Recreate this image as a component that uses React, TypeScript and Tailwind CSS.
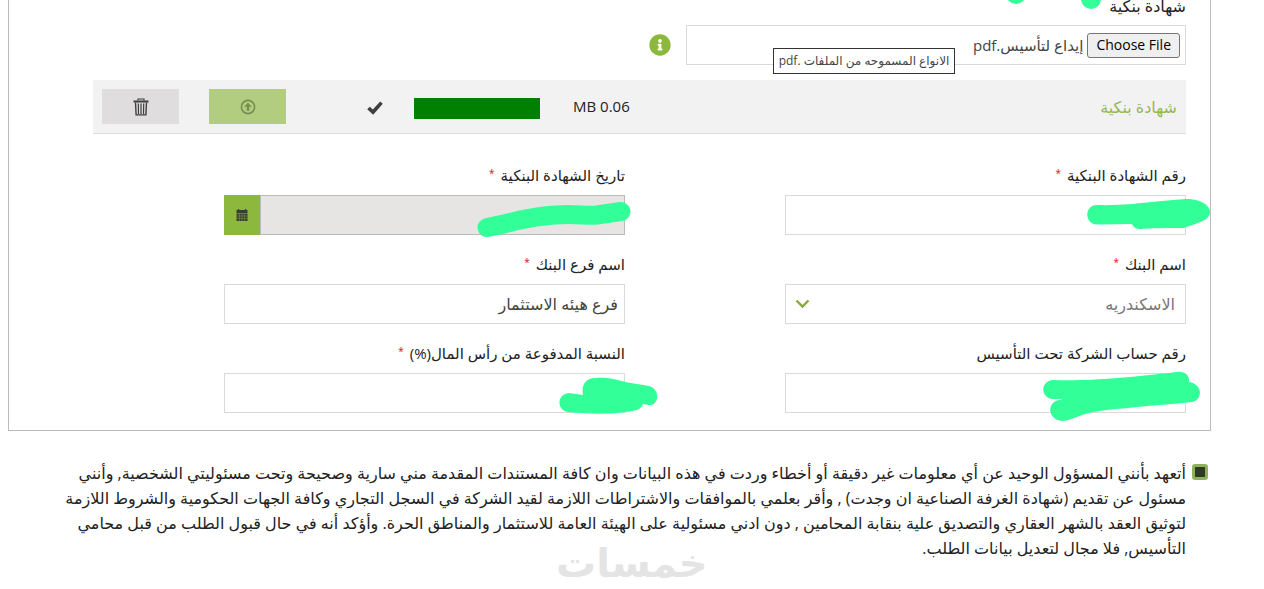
import { useRef, useState } from "react";
import type { ReactNode } from "react";
import { FaInfoCircle } from "react-icons/fa";

const inputClass =
    "block w-full h-10 border border-[#d9d9d9] bg-white px-[6px] text-base text-[#444] outline-none focus:border-[#8cb83d]";

interface FieldProps {
    id: string;
    label: string;
    required?: boolean;
    children: ReactNode;
}

function Field({ id, label, required, children }: FieldProps) {
    return (
        <div className="w-5/7">
            <label htmlFor={id} className="mb-2 block h-6 text-[15px] leading-6 text-[#222]">
                {label}
                {required && <span className="ms-[6px] align-top text-[10px] leading-5 text-red-600">*</span>}
            </label>
            <div className="relative">{children}</div>
        </div>
    );
}

function TrashIcon() {
    return (
        <svg width="16" height="18" viewBox="0 0 16 18" fill="none" stroke="#3f3f3f" aria-hidden="true">
            <path d="M5 2.5V1h6v1.5" strokeWidth="1.2" />
            <path d="M0.5 3.5h15" strokeWidth="2" />
            <path d="M2.5 4.5l0.6 12.4h9.8l0.6-12.4" strokeWidth="1.4" />
            <path d="M5.3 5.5l0.2 10.5M8 5.5V16M10.7 5.5l-0.2 10.5" strokeWidth="1.2" />
        </svg>
    );
}

function UploadIcon() {
    return (
        <svg width="16" height="16" viewBox="0 0 16 16" aria-hidden="true">
            <circle cx="8" cy="8" r="6.6" fill="none" stroke="#768f50" strokeWidth="1.6" />
            <path d="M8 3.8l3.8 4H9.2v4H6.8v-4H4.2z" fill="#768f50" />
        </svg>
    );
}

function CheckIcon() {
    return (
        <svg width="16" height="16" viewBox="0 0 16 16" aria-hidden="true">
            <path d="M0.2 10.2l2.6-2.4 3 2.8 7.4-8.2 2.6 2.4-9.6 11z" fill="#3f3f3f" />
        </svg>
    );
}

function CalendarIcon() {
    return (
        <svg width="12" height="12" viewBox="0 0 12 12" aria-hidden="true">
            <path d="M0.5 1h11v3h-11z" fill="#3b3f33" />
            <path d="M2.5 0v2M9.5 0v2" stroke="#3b3f33" strokeWidth="1.4" />
            <path d="M0.5 4.5h11V12h-11z" fill="#3b3f33" />
            <path d="M0.5 7h11M0.5 9.4h11M3.4 4.5V12M6 4.5V12M8.6 4.5V12" stroke="#8cb83d" strokeWidth="0.4" />
        </svg>
    );
}

export default function App() {
    const fileRef = useRef<HTMLInputElement>(null);
    const [fileName, setFileName] = useState("إيداع لتأسيس.pdf");
    const [bank, setBank] = useState("الاسكندريه");
    const [branch, setBranch] = useState("فرع هيئه الاستثمار");
    const [agreed, setAgreed] = useState(true);

    return (
        <div
            dir="rtl"
            className="bg-white pr-[53px] pl-2 font-['Open_Sans','DejaVu_Sans',sans-serif] text-[#222]"
        >
            <section className="border border-t-0 border-[#bbb] pr-6 pb-[17px] pl-[55px]">
                {/* File picker */}
                <div className="relative">
                    <label htmlFor="certificate-file" className="block h-[25px] text-base leading-3">
                        شهادة بنكية
                    </label>
                    <svg className="absolute top-0 right-[84px]" width="98" height="10" viewBox="0 0 98 10" fill="#33ff99" aria-hidden="true">
                        <circle cx="87" cy="-1" r="10" />
                        <circle cx="12" cy="-6" r="10" />
                    </svg>
                </div>
                <div className="flex items-center gap-[15px]">
                    <div className="relative flex h-10 w-[500px] items-center gap-1 border border-[#d9d9d9] px-[5px]">
                        <input
                            id="certificate-file"
                            ref={fileRef}
                            type="file"
                            accept=".pdf"
                            className="sr-only"
                            onChange={(e) => setFileName(e.target.files?.[0]?.name ?? "")}
                        />
                        <button
                            type="button"
                            onClick={() => fileRef.current?.click()}
                            className="h-[25px] rounded-[3px] border border-[#767676] bg-[#efefef] px-2 text-sm leading-5 text-black"
                        >
                            Choose File
                        </button>
                        <span className="text-[15px] text-[#444]">{fileName}</span>
                        <span
                            role="tooltip"
                            className="absolute top-[22px] left-[86px] flex h-[26px] w-[182px] items-center justify-center border border-[#333] bg-white text-xs whitespace-nowrap text-[#444]"
                        >
                            الانواع المسموحه من الملفات .pdf
                        </span>
                    </div>
                    <FaInfoCircle className="size-[22px] text-[#8cb83d]" />
                </div>

                {/* Uploaded file */}
                <div className="mt-[15px] ml-[29px] flex h-[54px] items-center border-b border-[#ddd] bg-[#f2f2f2] px-[9px]">
                    <span className="flex-1 text-base text-[#93b854]">شهادة بنكية</span>
                    <span dir="ltr" className="w-[57px] text-[15px] whitespace-nowrap">MB 0.06</span>
                    <div className="ms-[33px] mt-1 h-[21px] w-[126px] bg-[#008000]" />
                    <div className="ms-[31px]">
                        <CheckIcon />
                    </div>
                    <button type="button" aria-label="رفع" className="ms-[81px] flex h-[35px] w-[77px] items-center justify-center bg-[#b2cd7f]">
                        <UploadIcon />
                    </button>
                    <button type="button" aria-label="حذف" className="ms-[30px] flex h-[35px] w-[77px] items-center justify-center bg-[#dfdddd]">
                        <TrashIcon />
                    </button>
                </div>

                {/* Certificate details */}
                <div className="mt-[29px] grid grid-cols-2 gap-y-[17px]">
                    <Field id="cert-number" label="رقم الشهادة البنكية" required>
                        <input id="cert-number" type="text" className={inputClass} />
                        <svg className="absolute top-[2px] right-[-24px]" width="124" height="34" viewBox="0 0 124 34" fill="#33ff99" aria-hidden="true">
                            <path d="M11 8C40 9 60 5 100 2C114 2 124 8 124 15C124 24 110 26 98 31C80 31 65 31 55 32C50 32 47 30 46 27L11 27.500C-2 27-2 8 11 8Z" />
                        </svg>
                    </Field>

                    <Field id="cert-date" label="تاريخ الشهادة البنكية" required>
                        <div className="flex h-10">
                            <input
                                id="cert-date"
                                type="text"
                                readOnly
                                className="min-w-0 flex-1 border border-[#bbb] bg-[#e7e5e4] px-[6px] text-base text-[#444] outline-none"
                            />
                            <button type="button" aria-label="التقويم" className="flex w-9 items-center justify-center bg-[#8cb83d]">
                                <CalendarIcon />
                            </button>
                        </div>
                        <svg className="absolute top-[6px] right-[-6px]" width="156" height="38" viewBox="0 0 156 38" fill="none" stroke="#33ff99" strokeWidth="19" strokeLinecap="round" strokeLinejoin="round" aria-hidden="true">
                            <path d="M12 26.5C40 21 55 15 80 14C100 12.5 112 15 122 14L146 10.5" />
                        </svg>
                    </Field>

                    <Field id="bank-name" label="اسم البنك" required>
                        <select
                            id="bank-name"
                            value={bank}
                            onChange={(e) => setBank(e.target.value)}
                            className="block h-10 w-full appearance-none border border-[#d9d9d9] bg-white px-[10px] text-base text-[#777] outline-none"
                        >
                            <option>الاسكندريه</option>
                        </select>
                        <svg className="pointer-events-none absolute top-[15px] left-[10px]" width="15" height="10" viewBox="0 0 15 10" fill="none" stroke="#86ab3d" strokeWidth="2.4" aria-hidden="true">
                            <path d="M1.5 1.5l6 6 6-6" />
                        </svg>
                    </Field>

                    <Field id="bank-branch" label="اسم فرع البنك" required>
                        <input
                            id="bank-branch"
                            type="text"
                            value={branch}
                            onChange={(e) => setBranch(e.target.value)}
                            className={inputClass}
                        />
                    </Field>

                    <Field id="account-number" label="رقم حساب الشركة تحت التأسيس">
                        <input id="account-number" type="text" className={inputClass} />
                        <svg className="absolute top-[-2px] right-[-14px]" width="157" height="50" viewBox="0 0 157 50" fill="#33ff99" aria-hidden="true">
                            <path d="M10 9C50 10 80 7 134 1C142 0 147 5 146 11C160 13 160 29 149 31C110 35 75 37 50 41C35 44 27 50 19 50C8 49 4 38 10 32C13 29 17 29 20 28L10 28C-3 27-3 10 10 9Z" />
                        </svg>
                    </Field>

                    <Field id="paid-ratio" label="النسبة المدفوعة من رأس المال(%)" required>
                        <input id="paid-ratio" type="text" className={inputClass} />
                        <svg className="absolute top-[4px] right-[-33px]" width="99" height="38" viewBox="0 0 99 38" fill="#33ff99" aria-hidden="true">
                            <path d="M10 16L24 18C22 8 27 1 36 1C48 0 55 2 66 5L90 9C101 12 101 28 90 28L84 27C82 32 78 33 74 34C50 38 30 37 9 35C-3 33-2 17 10 16Z" />
                        </svg>
                    </Field>
                </div>
            </section>

            {/* Declaration */}
            <div className="relative mt-[30px] flex pb-[28px] pl-[38px]">
                <input
                    id="declaration"
                    type="checkbox"
                    checked={agreed}
                    onChange={(e) => setAgreed(e.target.checked)}
                    className="ms-[3px] mt-[3px] size-4 shrink-0 appearance-none rounded-[3px] border-[3px] border-[#8fb35c] bg-white checked:bg-[#2f3a22]"
                />
                <label htmlFor="declaration" className="ms-[6px] flex-1 text-base leading-[25px] whitespace-nowrap">
                    أتعهد بأنني المسؤول الوحيد عن أي معلومات غير دقيقة أو أخطاء وردت في هذه البيانات وان كافة المستندات المقدمة مني سارية وصحيحة وتحت مسئوليتي الشخصية, وأنني
                    <br />
                    مسئول عن تقديم (شهادة الغرفة الصناعية ان وجدت) , وأقر بعلمي بالموافقات والاشتراطات اللازمة لقيد الشركة في السجل التجاري وكافة الجهات الحكومية والشروط اللازمة
                    <br />
                    لتوثيق العقد بالشهر العقاري والتصديق علية بنقابة المحامين , دون ادني مسئولية على الهيئة العامة للاستثمار والمناطق الحرة. وأؤكد أنه في حال قبول الطلب من قبل محامي
                    <br />
                    التأسيس, فلا مجال لتعديل بيانات الطلب.
                </label>
                <div className="pointer-events-none absolute bottom-[5px] left-[548px] text-[40px] leading-[44px] font-bold text-[#e4e4e4]">
                    خمسات
                </div>
            </div>
        </div>
    );
}
